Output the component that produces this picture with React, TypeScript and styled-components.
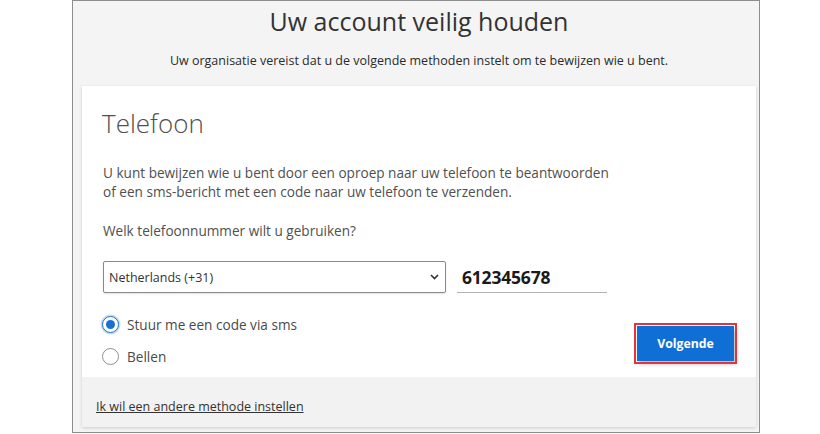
import styled, { createGlobalStyle } from 'styled-components';

const GlobalStyle = createGlobalStyle`
  html, body {
    margin: 0;
    padding: 0;
    background: #ffffff;
  }
  body {
    font-family: "Open Sans", "Noto Sans", Arial, sans-serif;
  }
`;

const Page = styled.div`
  width: 820px;
  height: 434px;
  overflow: hidden;
  box-sizing: border-box;
  padding-left: 72px;
`;

const Frame = styled.div`
  width: 688px;
  height: 433px;
  box-sizing: border-box;
  border: 1px solid #8d8d8d;
  background: #f4f4f4;
  display: flex;
  flex-direction: column;
  padding: 0 3px 0 9px;
`;

const Title = styled.h1`
  margin: 5px 0 0;
  font-size: 25px;
  line-height: 30px;
  font-weight: 400;
  color: #333333;
  text-align: center;
`;

const Subtitle = styled.p`
  margin: 17px 0 0;
  font-size: 12.5px;
  line-height: 16px;
  color: #2b2b2b;
  text-align: center;
`;

const Card = styled.div`
  margin-top: 17px;
  background: #f2f2f2;
  box-shadow: 0 1px 3px rgba(0, 0, 0, 0.16);
  display: flex;
  flex-direction: column;
`;

const CardBody = styled.div`
  background: #ffffff;
  padding: 19px 22px 11px 20px;
  display: flex;
  flex-direction: column;
`;

const Heading = styled.h2`
  margin: 0;
  font-size: 26px;
  line-height: 36px;
  font-weight: 300;
  color: #505050;
`;

const Paragraph = styled.p<{ $gap: number }>`
  margin: ${p => p.$gap}px 0 0 1px;
  font-size: 13.6px;
  line-height: 19px;
  color: #505050;
`;

const InputRow = styled.div`
  margin-top: 21px;
  display: flex;
  align-items: center;
  gap: 11px;
  padding-left: 1px;
`;

const SelectBox = styled.div`
  width: 343px;
  height: 32px;
  box-sizing: border-box;
  border: 1px solid #8a8a8a;
  border-radius: 2px;
  box-shadow: 0 1px 2px rgba(0, 0, 0, 0.12);
  display: flex;
  align-items: center;
  justify-content: space-between;
  padding: 0 6px 0 5px;
  font-size: 12.5px;
  color: #333333;
  background: #ffffff;
`;

const PhoneField = styled.div`
  width: 150px;
  height: 32px;
  box-sizing: border-box;
  border-bottom: 1px solid #b4b4b4;
  display: flex;
  align-items: center;
  padding-left: 5px;
  font-size: 17.5px;
  font-weight: 700;
  color: #1a1a1a;
  letter-spacing: -0.2px;
`;

const ActionRow = styled.div`
  margin-top: 21px;
  display: flex;
  align-items: center;
  justify-content: space-between;
`;

const RadioGroup = styled.div`
  display: flex;
  flex-direction: column;
  gap: 12px;
`;

const RadioOption = styled.label`
  display: flex;
  align-items: center;
  gap: 8px;
  height: 20px;
  font-size: 13.6px;
  color: #4a4a4a;
`;

const RadioCircle = styled.span<{ $checked: boolean }>`
  width: 17px;
  height: 17px;
  box-sizing: border-box;
  border-radius: 50%;
  border: 1.5px solid ${p => (p.$checked ? '#1a73d0' : '#8f8f8f')};
  box-shadow: ${p => (p.$checked ? '0 0 0 1.5px rgba(26, 115, 208, 0.25)' : 'none')};
  display: flex;
  align-items: center;
  justify-content: center;
  background: #ffffff;

  &::after {
    content: '';
    width: 9px;
    height: 9px;
    border-radius: 50%;
    background: ${p => (p.$checked ? '#1a6fd0' : 'transparent')};
  }
`;

const NextButton = styled.button`
  margin-top: 6px;
  width: 97px;
  height: 35px;
  border: none;
  background: #0f6fd4;
  color: #ffffff;
  font-family: "Open Sans", Arial, sans-serif;
  font-size: 12.3px;
  font-weight: 700;
  outline: 2px solid #e0363b;
  outline-offset: 1px;
  box-shadow: 2px 3px 4px rgba(0, 0, 0, 0.28);
  cursor: pointer;
`;

const CardFooter = styled.div`
  height: 50px;
  box-sizing: border-box;
  padding: 17px 0 0 14px;
`;

const FooterLink = styled.a`
  font-size: 12.5px;
  line-height: 17px;
  color: #333333;
  text-decoration: underline;
`;

function Chevron() {
  return (
    <svg width="9" height="6" viewBox="0 0 9 6" fill="none">
      <path d="M1 1l3.5 3.5L8 1" stroke="#333" strokeWidth="1.6" />
    </svg>
  );
}

export default function App() {
  return (
    <>
      <GlobalStyle />
      <Page>
        <Frame>
          <Title>Uw account veilig houden</Title>
          <Subtitle>
            Uw organisatie vereist dat u de volgende methoden instelt om te bewijzen wie u bent.
          </Subtitle>
          <Card>
            <CardBody>
              <Heading>Telefoon</Heading>
              <Paragraph $gap={22}>
                U kunt bewijzen wie u bent door een oproep naar uw telefoon te beantwoorden
                <br />
                of een sms-bericht met een code naar uw telefoon te verzenden.
              </Paragraph>
              <Paragraph $gap={20}>Welk telefoonnummer wilt u gebruiken?</Paragraph>
              <InputRow>
                <SelectBox>
                  <span>Netherlands (+31)</span>
                  <Chevron />
                </SelectBox>
                <PhoneField>612345678</PhoneField>
              </InputRow>
              <ActionRow>
                <RadioGroup>
                  <RadioOption>
                    <RadioCircle $checked />
                    Stuur me een code via sms
                  </RadioOption>
                  <RadioOption>
                    <RadioCircle $checked={false} />
                    Bellen
                  </RadioOption>
                </RadioGroup>
                <NextButton>Volgende</NextButton>
              </ActionRow>
            </CardBody>
            <CardFooter>
              <FooterLink href="#">Ik wil een andere methode instellen</FooterLink>
            </CardFooter>
          </Card>
        </Frame>
      </Page>
    </>
  );
}
